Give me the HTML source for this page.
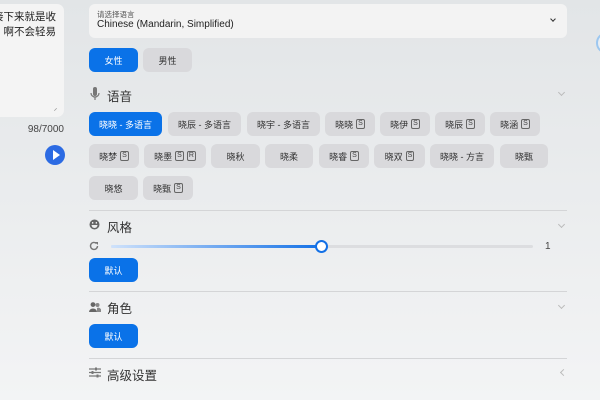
<!DOCTYPE html>
<html><head><meta charset="utf-8"><style>
*{margin:0;padding:0;box-sizing:border-box}
body{width:600px;height:400px;overflow:hidden;position:relative;background:linear-gradient(#e2e5e7,#f3f4f5);font-family:"Liberation Sans","Noto Sans CJK SC",sans-serif;color:#222}
.abs{position:absolute}
.card{left:-10px;top:4px;width:74px;height:113px;background:#f4f4f4;border-radius:7px}
.chip{position:absolute;height:24px;border-radius:6px;background:#d9d9dc;font-size:9px;color:#333;display:flex;align-items:center;justify-content:center;white-space:nowrap}
.chip.on{background:#0a72e8;color:#fff}
.s{display:inline-block;border:1px solid #666;border-radius:2px;font-size:7px;line-height:8px;padding:0 1px;margin-left:3px;color:#444}
.btn{position:absolute;height:24px;width:49px;border-radius:6px;background:#0a72e8;color:#fff;font-size:9px;display:flex;align-items:center;justify-content:center}
.hr{position:absolute;left:89px;width:478px;height:1px;background:#d4d5d7}
.h{position:absolute;left:107px;font-size:12.5px;color:#333}
.chev{position:absolute;left:559px;width:5px;height:5px;border-right:1px solid #bbb;border-bottom:1px solid #bbb;transform:rotate(45deg)}
</style></head><body>
<div class="abs card"></div>
<div class="abs" style="right:544px;top:10px;font-size:10.5px;line-height:15px;text-align:right;width:80px">接下来就是收<br>啊不会轻易</div>
<div class="abs" style="left:52px;top:106px;width:5px;height:5px;border-right:1px solid #999;transform:rotate(45deg) scale(.7)"></div>
<div class="abs" style="left:20px;top:124px;width:44px;text-align:right;font-size:10px;color:#444">98/7000</div>
<div class="abs" style="left:45px;top:145px;width:20px;height:20px;border-radius:50%;background:#2c6be3"></div>
<div class="abs" style="left:53px;top:150px;width:0;height:0;border-left:7px solid #fff;border-top:5px solid transparent;border-bottom:5px solid transparent"></div>

<div class="abs" style="left:89px;top:4px;width:478px;height:34px;background:#f3f3f3;border-radius:6px"></div>
<div class="abs" style="left:97px;top:9px;font-size:7.5px;color:#555">请选择语言</div>
<div class="abs" style="left:97px;top:19px;font-size:10px;color:#222">Chinese (Mandarin, Simplified)</div>
<div class="abs" style="left:551px;top:17px;width:4px;height:4px;border-right:1px solid #333;border-bottom:1px solid #333;transform:rotate(45deg)"></div>
<div class="abs" style="left:596px;top:32px;width:22px;height:22px;border-radius:50%;border:2px solid #9cc7f0;background:#e9eef3"></div>

<div class="btn" style="left:89px;top:48px">女性</div>
<div class="chip" style="left:143px;top:48px;width:49px">男性</div>

<svg class="abs" style="left:90px;top:87px" width="10" height="14" viewBox="0 0 10 14"><rect x="3" y="0" width="4" height="9" rx="2" fill="#777"/><path d="M1 6a4 4 0 0 0 8 0M5 10v3" stroke="#777" fill="none" stroke-width="1.2"/></svg>
<div class="h" style="top:86px">语音</div>
<div class="chev" style="top:90px"></div>

<div class="chip on" style="left:89px;top:112px;width:73px">晓晓 - 多语言</div>
<div class="chip" style="left:168px;top:112px;width:73px">晓辰 - 多语言</div>
<div class="chip" style="left:247px;top:112px;width:73px">晓宇 - 多语言</div>
<div class="chip" style="left:325px;top:112px;width:50px">晓晓<span class="s">S</span></div>
<div class="chip" style="left:380px;top:112px;width:50px">晓伊<span class="s">S</span></div>
<div class="chip" style="left:435px;top:112px;width:50px">晓辰<span class="s">S</span></div>
<div class="chip" style="left:490px;top:112px;width:50px">晓涵<span class="s">S</span></div>

<div class="chip" style="left:89px;top:144px;width:50px">晓梦<span class="s">S</span></div>
<div class="chip" style="left:144px;top:144px;width:62px">晓墨<span class="s">S</span><span class="s">R</span></div>
<div class="chip" style="left:211px;top:144px;width:49px">晓秋</div>
<div class="chip" style="left:265px;top:144px;width:48px">晓柔</div>
<div class="chip" style="left:319px;top:144px;width:50px">晓睿<span class="s">S</span></div>
<div class="chip" style="left:374px;top:144px;width:51px">晓双<span class="s">S</span></div>
<div class="chip" style="left:430px;top:144px;width:64px">晓晓 - 方言</div>
<div class="chip" style="left:500px;top:144px;width:48px">晓甄</div>

<div class="chip" style="left:89px;top:176px;width:49px">晓悠</div>
<div class="chip" style="left:143px;top:176px;width:50px">晓甄<span class="s">S</span></div>

<div class="hr" style="top:210px"></div>
<svg class="abs" style="left:89px;top:219px" width="11" height="11" viewBox="0 0 11 11"><circle cx="5.5" cy="5.5" r="5" fill="#666"/><rect x="3" y="3" width="1.3" height="1.6" fill="#eee"/><rect x="6.7" y="3" width="1.3" height="1.6" fill="#eee"/><path d="M2.5 6h6a3 3 0 0 1-6 0z" fill="#eee"/></svg>
<div class="h" style="top:217px">风格</div>
<div class="chev" style="top:222px"></div>
<svg class="abs" style="left:89px;top:241px" width="10" height="10" viewBox="0 0 10 10"><path d="M8.5 5a3.5 3.5 0 1 1-1-2.5" stroke="#777" stroke-width="1.4" fill="none"/><path d="M6 1h3v3z" fill="#777"/></svg>
<div class="abs" style="left:111px;top:245px;width:422px;height:3px;border-radius:2px;background:#dcdde0"></div>
<div class="abs" style="left:111px;top:245px;width:210px;height:3px;border-radius:2px;background:linear-gradient(90deg,#cfe2fb,#1370e6)"></div>
<div class="abs" style="left:315px;top:240px;width:13px;height:13px;border-radius:50%;background:#fff;border:2px solid #1370e6"></div>
<div class="abs" style="left:545px;top:241px;font-size:10px;color:#444">1</div>
<div class="btn" style="left:89px;top:258px">默认</div>

<div class="hr" style="top:291px"></div>
<svg class="abs" style="left:89px;top:302px" width="12" height="10" viewBox="0 0 12 10"><circle cx="4" cy="2.6" r="2.4" fill="#666"/><path d="M0 10a4 3.5 0 0 1 8 0z" fill="#666"/><circle cx="8.5" cy="3" r="2" fill="#888"/><path d="M8 10h4a3 3 0 0 0-4-4z" fill="#888"/></svg>
<div class="h" style="top:298px">角色</div>
<div class="chev" style="top:303px"></div>
<div class="btn" style="left:89px;top:324px">默认</div>

<div class="hr" style="top:358px"></div>
<svg class="abs" style="left:89px;top:367px" width="12" height="11" viewBox="0 0 12 11"><path d="M0 2h12M0 5.5h12M0 9h12" stroke="#777" stroke-width="1.2"/><rect x="6" y="0.5" width="2" height="3" fill="#777"/><rect x="2.5" y="4" width="2" height="3" fill="#777"/><rect x="7.5" y="7.5" width="2" height="3" fill="#777"/></svg>
<div class="h" style="top:365px">高级设置</div>
<div class="abs" style="left:561px;top:370px;width:5px;height:5px;border-left:1px solid #bbb;border-bottom:1px solid #bbb;transform:rotate(45deg)"></div>
</body></html>
